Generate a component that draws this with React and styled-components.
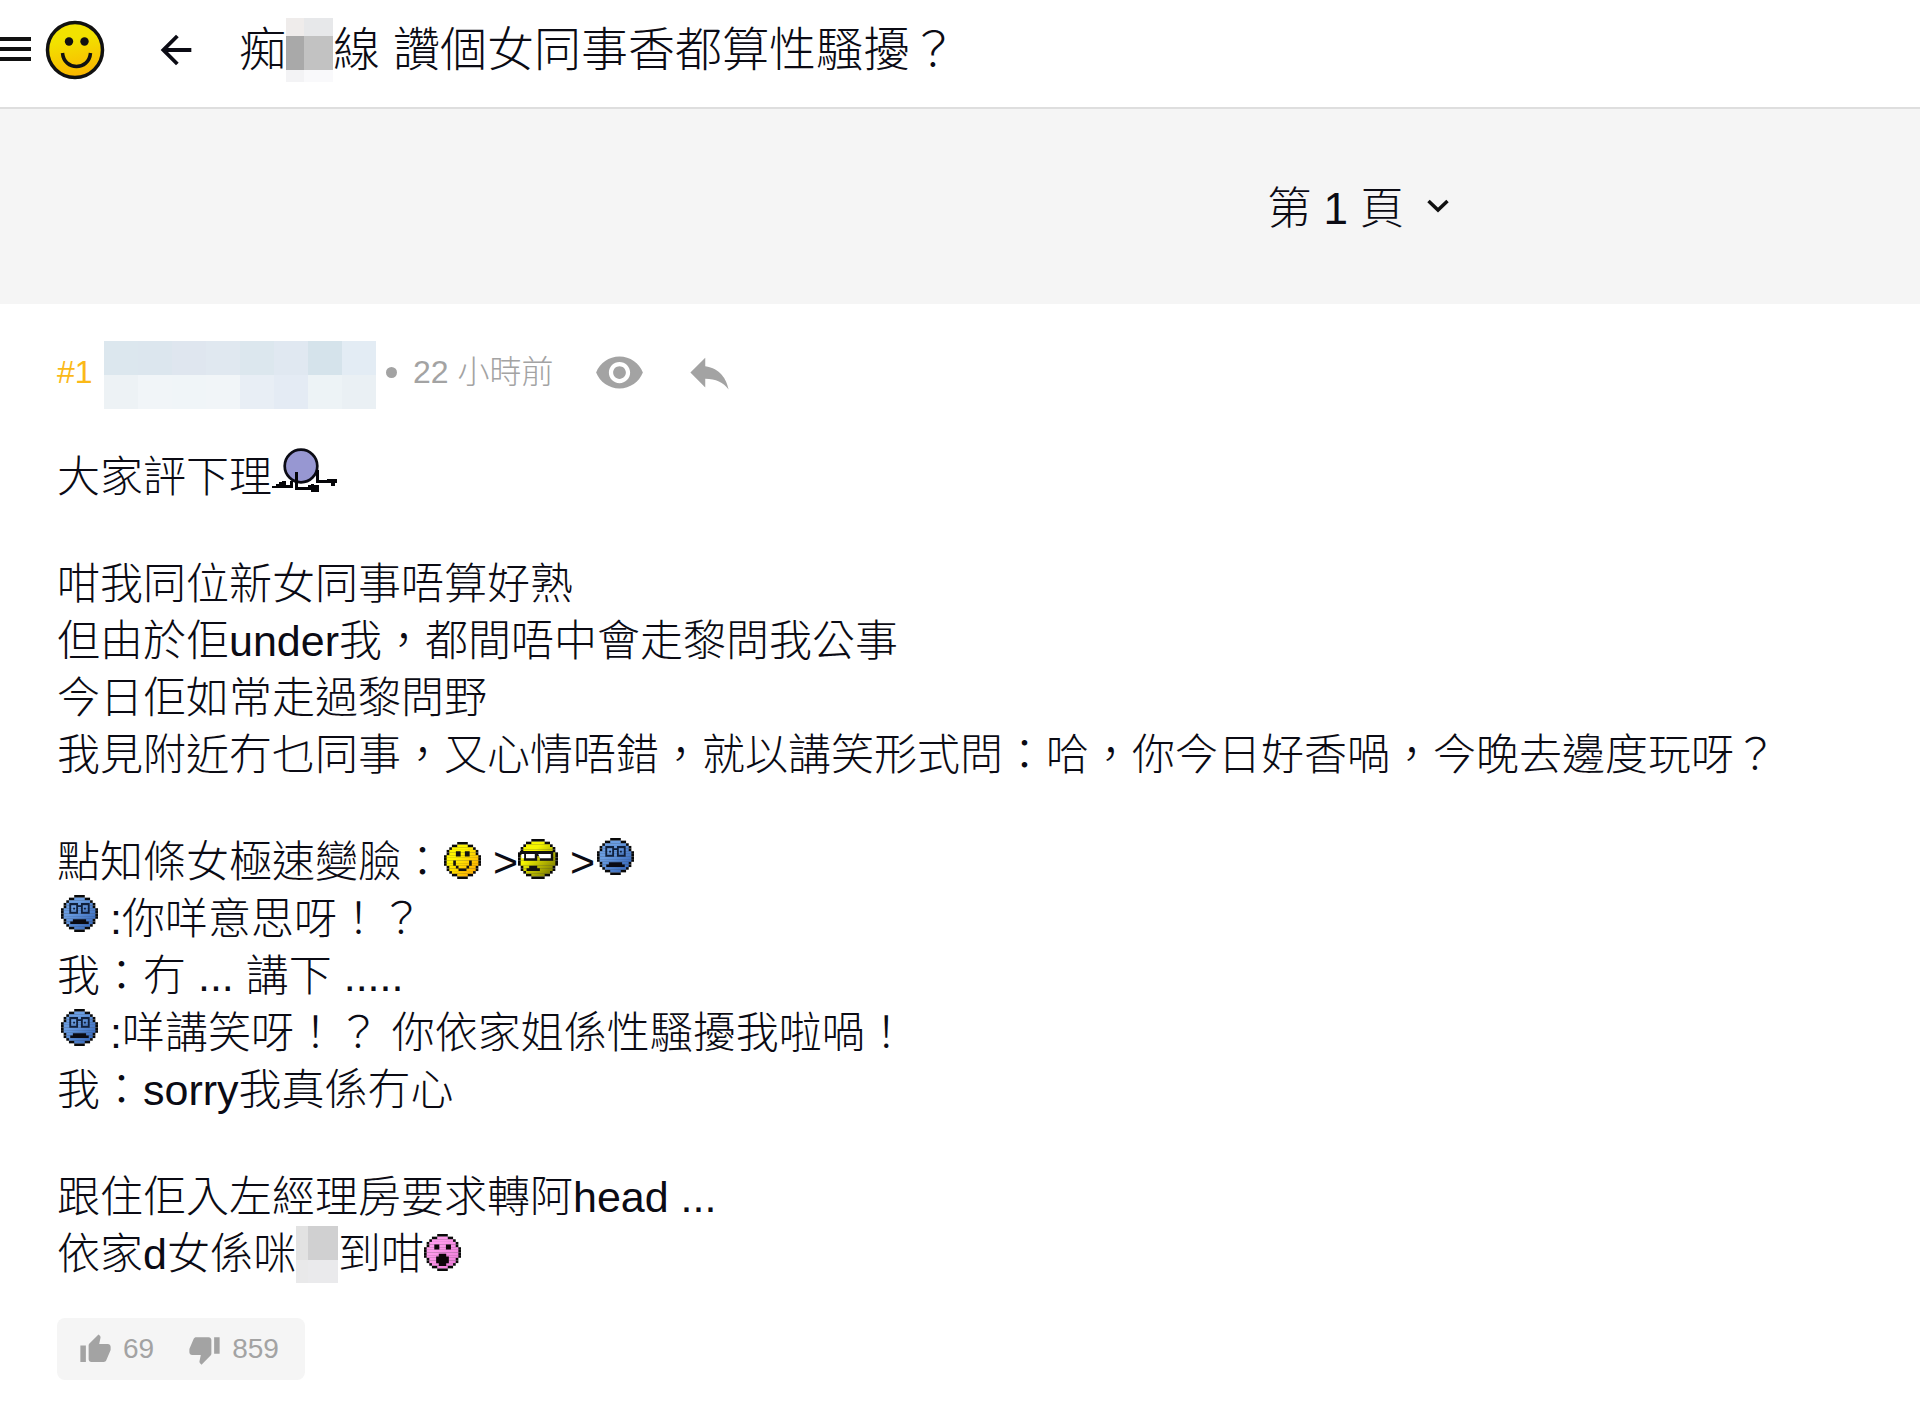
import React from "react";
import styled, { createGlobalStyle } from "styled-components";

const GlobalStyle = createGlobalStyle`
  * { box-sizing: border-box; }
  body {
    margin: 0;
    background: #fff;
    color: #0b0b14;
    font-family: "Liberation Sans", "Noto Sans CJK TC", sans-serif;
    font-weight: 300;
  }
  button, select {
    font: inherit;
    color: inherit;
    border: 0;
    margin: 0;
    padding: 0;
    background: none;
    cursor: pointer;
  }
  svg { display: block; }
`;

const Header = styled.header`
  display: flex;
  align-items: center;
  padding: 17px 24px 24px 0;
  border-bottom: 2px solid #dedede;
`;

const IconButton = styled.button`
  display: flex;
  flex: none;
  margin-left: ${(p) => p.$gap || 0}px;
`;

const Title = styled.h1`
  display: flex;
  align-items: center;
  margin: 0 0 0 40px;
  font-size: 47px;
  line-height: 66px;
  font-weight: 300;
  white-space: pre;
`;

const Mosaic = styled.span`
  display: inline-grid;
  flex: none;
  grid-template-columns: ${(p) => p.$cols};
  grid-template-rows: ${(p) => p.$rows};
  vertical-align: ${(p) => p.$align || "baseline"};
`;

const Tile = styled.span`
  background: ${(p) => p.$tone};
`;

const PagerBar = styled.nav`
  display: flex;
  align-items: center;
  height: 195px;
  padding: 4px 0 0 66%;
  background: #f5f5f5;
`;

const PagerSelect = styled.select`
  appearance: none;
  outline: none;
  font-size: 44px;
  line-height: 57px;
`;

const Chevron = styled.svg`
  margin: 0 0 6px 22px;
  pointer-events: none;
`;

const Post = styled.article`
  padding: 31px 57px 30px;
`;

const Meta = styled.div`
  display: flex;
  align-items: center;
  height: 74px;
  font-size: 32px;
  line-height: 40px;
  color: #a3a3a3;
`;

const Floor = styled.span`
  width: 47px;
  color: #fbb917;
`;

const Author = styled.span`
  display: flex;
  align-self: flex-end;
`;

const Dot = styled.span`
  width: 11px;
  height: 11px;
  margin: 0 16px 0 10px;
  border-radius: 50%;
  background: #a3a3a3;
`;

const Body = styled.div`
  margin-top: 39px;
  font-size: 43px;
  line-height: 57px;
`;

const Paragraph = styled.p`
  margin: 0 0 50px;
  &:last-child { margin-bottom: 0; }
`;

const Sprite = styled.svg`
  display: inline-block;
  vertical-align: baseline;
  margin: 0 0 -2px ${(p) => p.$indent || 0}px;
`;

const Votes = styled.div`
  display: inline-flex;
  align-items: center;
  gap: 34px;
  height: 62px;
  margin-top: 35px;
  padding: 0 26px 0 22px;
  border-radius: 8px;
  background: #f5f5f5;
`;

const Vote = styled.button`
  display: flex;
  align-items: center;
  gap: 11px;
  font-size: 28px;
  line-height: 32px;
  color: #a3a3a3;
`;

const ICONS = {
  back: "M20 11H7.83l5.59-5.59L12 4l-8 8 8 8 1.41-1.41L7.83 13H20v-2z",
  eye: "M12 4.5C7 4.5 2.73 7.61 1 12c1.73 4.39 6 7.5 11 7.5s9.27-3.11 11-7.5c-1.73-4.39-6-7.5-11-7.5zM12 17c-2.76 0-5-2.24-5-5s2.24-5 5-5 5 2.24 5 5-2.24 5-5 5zm0-8c-1.66 0-3 1.34-3 3s1.34 3 3 3 3-1.34 3-3-1.34-3-3-3z",
  reply: "M10 9V5l-7 7 7 7v-4.1c5 0 8.5 1.6 11 5.1-1-5-4-10-11-11z",
  up: "M1 21h4V9H1v12zm22-11c0-1.1-.9-2-2-2h-6.31l.95-4.57.03-.32c0-.41-.17-.79-.44-1.06L14.17 1 7.59 7.59C7.22 7.95 7 8.45 7 9v10c0 1.1.9 2 2 2h9c.83 0 1.54-.5 1.84-1.22l3.02-7.05c.09-.23.14-.47.14-.73v-2z",
  down: "M15 3H6c-.83 0-1.54.5-1.84 1.22l-3.02 7.05c-.09.23-.14.47-.14.73v2c0 1.1.9 2 2 2h6.31l-.95 4.57-.03.32c0 .41.17.79.44 1.06L9.83 23l6.59-6.59c.36-.36.58-.86.58-1.41V5c0-1.1-.9-2-2-2zm4 0v12h4V3h-4z",
};

function Icon({ name, size }) {
  return (
    <svg width={size} height={size} viewBox="0 0 24 24" fill="currentColor" aria-hidden="true">
      <path d={ICONS[name]} />
    </svg>
  );
}

function Pixelated({ cols, rows, tones, align }) {
  return (
    <Mosaic $cols={cols} $rows={rows} $align={align} aria-hidden="true">
      {tones.map((tone, i) => <Tile key={i} $tone={tone} />)}
    </Mosaic>
  );
}

const INSETS = {
  14: [5, 3, 2, 1, 1, 0, 0, 0, 0, 1, 1, 2, 3, 5],
  15: [5, 3, 2, 1, 1, 0, 0, 0, 0, 0, 1, 1, 2, 3, 5],
};

/* A stepped disc: a black silhouette with the fill set one pixel inside it. */
function Disc({ size, fill }) {
  const insets = INSETS[size];
  return (
    <>
      {insets.map((inset, y) => (
        <rect key={y} x={inset} y={y} width={size - inset * 2} height="1" fill="#090909" />
      ))}
      {insets.slice(1, -1).map((inset, i) => {
        const x = Math.max(inset + 1, insets[i], insets[i + 2]);
        return <rect key={i} x={x} y={i + 1} width={size - x * 2} height="1" fill={fill} />;
      })}
    </>
  );
}

function Face({ label, size = 14, px = 37, from, to, id, lift = 0, indent, children }) {
  const unit = size / px;
  return (
    <Sprite
      width={px}
      height={px + lift}
      viewBox={`0 0 ${size} ${size + lift * unit}`}
      role="img"
      aria-label={label}
      $indent={indent}
    >
      <defs>
        <linearGradient id={id} gradientUnits="userSpaceOnUse" x1="3" y1="3" x2={size - 1} y2={size - 1}>
          <stop offset="0.2" stopColor={from} />
          <stop offset="1" stopColor={to} />
        </linearGradient>
      </defs>
      <Disc size={size} fill={`url(#${id})`} />
      {children}
    </Sprite>
  );
}

function Smile() {
  return (
    <Face label="smile" id="smile" from="#fff500" to="#ff9d00">
      <path d="M4.5 3.5H6.300V5.500H4.500zM7.900 3.500H9.700V5.500H7.900z" fill="#111" />
      <path d="M3.500 7h1v2h-1zM4.500 9h1v1h-1zM5.500 10h3v1h-3zM8.500 9h1v1h-1zM9.500 7h1v2h-1z" fill="#111" />
    </Face>
  );
}

function Annoyed() {
  return (
    <Face label="annoyed" id="annoyed" size={15} px={40} from="#f6f600" to="#686800">
      <path d="M.7 4.500h12.500v3.700h-5V6.500h-1v1.700h-5V6H.7z" fill="#111" />
      <path d="M1.300 5.600h1v1.600h-1zM3 5.600h3.300v1.600H3zM7.600 5.600h4.700v1.600H8.200z" fill="#fff" />
      <path d="M4.200 10h3v1h1v1H3.200v-1h1z" fill="#111" />
    </Face>
  );
}

function Blue({ id, indent = 2 }) {
  return (
    <Face label="shocked" id={id} from="#6a9de2" to="#2e5fb4" lift={4} indent={indent}>
      <path
        d="M3.500 3.400h2.600v3.300H3.500zM7.900 3.400h2.600v3.300H7.900zM6.100 4.200h1.800"
        fill="none"
        stroke="#10203c"
        strokeWidth="0.7"
      />
      <path d="M4.600 4.800h.7v.7h-.7zM8.700 4.800h.7v.7h-.7z" fill="#10203c" />
      <path d="M4.500 9.200h5v.8h1v1h-7v-1h1z" fill="#0a0a12" />
    </Face>
  );
}

function Gasp() {
  return (
    <Face label="gasp" id="gasp" from="#ff9aec" to="#ea78d6">
      <path d="M3.900 4h1.900v1.900H3.900zM8.300 4h1.900v1.900H8.300zM5.600 7.500h2.800v1h1v2.600h-1v1H5.600v-1h-1V8.500h1z" fill="#0d0609" />
    </Face>
  );
}

function Kneel() {
  return (
    <Sprite width="66" height="46" viewBox="0 0 66 46" role="img" aria-label="kneel">
      <circle cx="29" cy="18" r="16.300" fill="#9797d2" stroke="#0b0b14" strokeWidth="2.700" />
      <g fill="#050508">
        <path d="M0 38h4v-2h3v-2h3v-1h4v4h4v-4h3v7H0z" />
        <path d="M23 24h3v15h10v-2h3v-1h3v1h5v7h-8v-2H23z" />
        <path d="M44 22h3v10h8v-1h10v4h-2v3h-4v-3h-15z" />
      </g>
    </Sprite>
  );
}

function Logo() {
  return (
    <svg width="60" height="60" viewBox="0 0 60 60" role="img" aria-label="LIHKG">
      <defs>
        <linearGradient id="logo" x1="0.4" y1="0" x2="0.6" y2="1">
          <stop offset="0.3" stopColor="#f2e200" />
          <stop offset="1" stopColor="#fbb400" />
        </linearGradient>
      </defs>
      <circle cx="30" cy="30" r="27.500" fill="url(#logo)" stroke="#111" strokeWidth="3.500" />
      <circle cx="24" cy="21.500" r="4.200" fill="#111" />
      <circle cx="39.500" cy="21.500" r="4.200" fill="#111" />
      <path d="M17.500 33C19 51 44 51 45.500 33" fill="none" stroke="#111" strokeWidth="3.500" />
    </svg>
  );
}

export default function App() {
  return (
    <>
      <GlobalStyle />
      <Header>
        <IconButton aria-label="選單">
          <svg width="31" height="28" viewBox="0 0 31 28" fill="none" stroke="#111" strokeWidth="4" aria-hidden="true">
            <path d="M0 3h31M0 13h31M0 23h31" />
          </svg>
        </IconButton>
        <IconButton as="a" href="#home" $gap={14}><Logo /></IconButton>
        <IconButton aria-label="返回" $gap={48}><Icon name="back" size={46} /></IconButton>
        <Title>
          痴
          <Pixelated
            cols="18px 29px"
            rows="18px 34px 12px"
            tones={["#efeceb", "#e7e8ea", "#a9a9a9", "#c2c2c2", "#f3f3f5", "#f9f9fb"]}
          />
          線 讚個女同事香都算性騷擾？
        </Title>
      </Header>

      <PagerBar>
        <PagerSelect aria-label="頁數" defaultValue="1">
          <option value="1">第 1 頁</option>
        </PagerSelect>
        <Chevron width="24" height="14" viewBox="0 0 24 14" fill="none" stroke="#111" strokeWidth="3.500" aria-hidden="true">
          <path d="M2.500 2l9.500 9 9.500-9" />
        </Chevron>
      </PagerBar>

      <Post>
        <Meta>
          <Floor>#1</Floor>
          <Author>
            <Pixelated
              cols="repeat(8, 34px)"
              rows="34px 34px"
              tones={[
                "#dce7ee", "#dce6ee", "#dfe6ef", "#e0e8f0", "#dce7ee", "#e0e8f1", "#d5e3eb", "#e3ecf4",
                "#edf2f5", "#f1f5f8", "#f0f5f8", "#f1f5f8", "#e8eef5", "#e4ebf4", "#edf3f6", "#eaf0f4",
              ]}
            />
          </Author>
          <Dot />
          <span>22 小時前</span>
          <IconButton aria-label="只看此人" $gap={40}><Icon name="eye" size={51} /></IconButton>
          <IconButton aria-label="回覆" $gap={39}><Icon name="reply" size={51} /></IconButton>
        </Meta>

        <Body>
          <Paragraph>大家評下理<Kneel /></Paragraph>
          <Paragraph>
            咁我同位新女同事唔算好熟<br />
            但由於佢under我，都間唔中會走黎問我公事<br />
            今日佢如常走過黎問野<br />
            我見附近冇乜同事，又心情唔錯，就以講笑形式問：哈，你今日好香喎，今晚去邊度玩呀？
          </Paragraph>
          <Paragraph>
            點知條女極速變臉：<Smile /> &gt;<Annoyed /> &gt;<Blue id="blue-a" /><br />
            <Blue id="blue-b" indent={4} /> :你咩意思呀！？<br />
            我：冇 ... 講下 .....<br />
            <Blue id="blue-c" indent={4} /> :咩講笑呀！？ 你依家姐係性騷擾我啦喎！<br />
            我：sorry我真係冇心
          </Paragraph>
          <Paragraph>
            跟住佢入左經理房要求轉阿head ...<br />
            依家d女係咪
            <Pixelated
              cols="12px 30px"
              rows="34px 23px"
              align="top"
              tones={["#e2e2e2", "#d0d0d1", "#e9e9ea", "#eaeaec"]}
            />
            到咁<Gasp />
          </Paragraph>
        </Body>

        <Votes>
          <Vote aria-label="正評 69"><Icon name="up" size={33} />69</Vote>
          <Vote aria-label="負評 859"><Icon name="down" size={33} />859</Vote>
        </Votes>
      </Post>
    </>
  );
}
